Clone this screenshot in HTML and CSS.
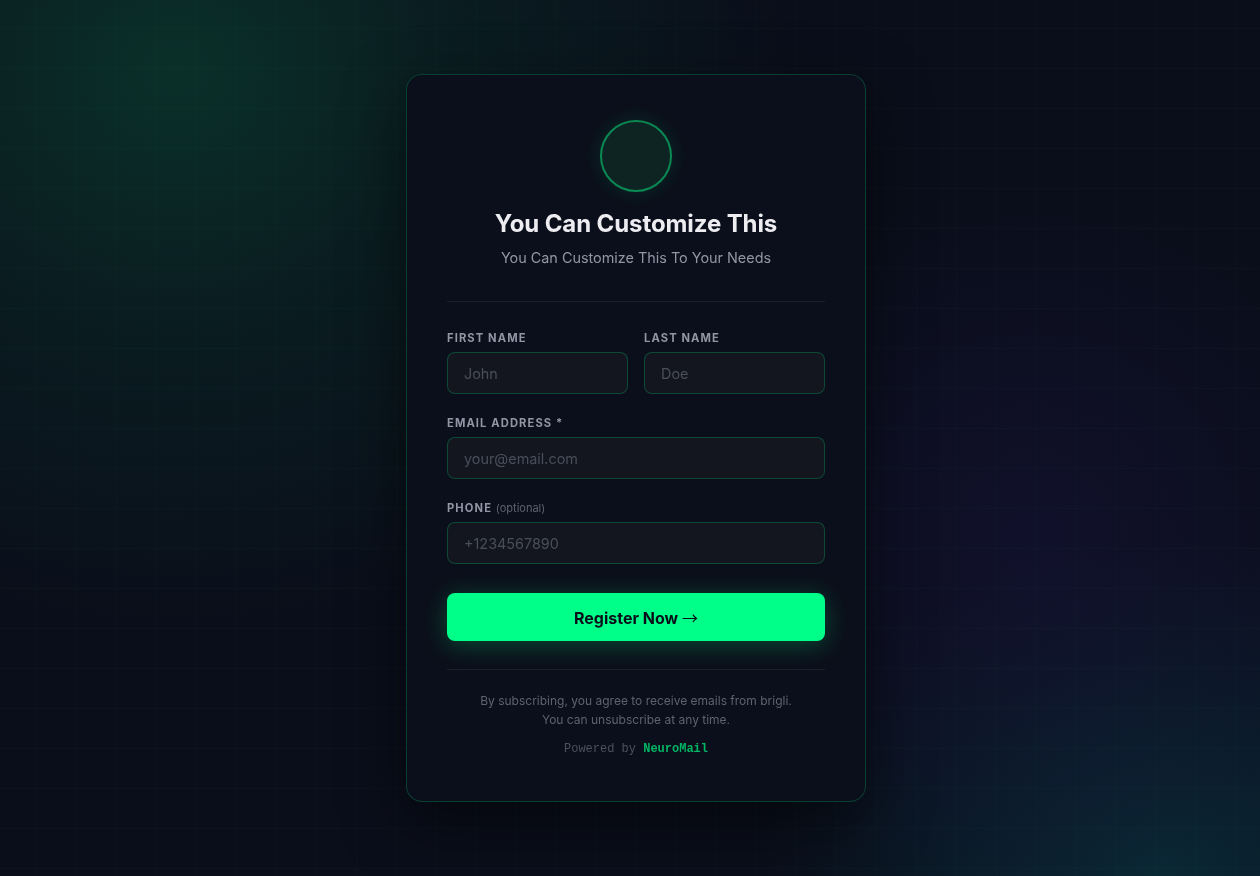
FILE: index.html
```html
<!DOCTYPE html>
<html lang="en">
<head>
<meta charset="utf-8">
<title>Register</title>
<link rel="stylesheet" href="styles.css">
</head>
<body>
<div class="bg"></div>
<main class="page">
  <section class="card">
    <div class="logo"></div>
    <h1 class="title">You Can Customize This</h1>
    <p class="subtitle">You Can Customize This To Your Needs</p>
    <hr class="divider">
    <form class="form">
      <div class="row">
        <div class="field">
          <label class="label">First Name</label>
          <input class="input" type="text" placeholder="John">
        </div>
        <div class="field">
          <label class="label">Last Name</label>
          <input class="input" type="text" placeholder="Doe">
        </div>
      </div>
      <div class="field">
        <label class="label">Email Address *</label>
        <input class="input" type="email" placeholder="your@email.com">
      </div>
      <div class="field">
        <label class="label">Phone <span class="opt">(optional)</span></label>
        <input class="input" type="tel" placeholder="+1234567890">
      </div>
      <button class="btn" type="button">Register Now <span class="arrow">→</span></button>
    </form>
    <hr class="divider bottom">
    <p class="legal">By subscribing, you agree to receive emails from brigli.<br>You can unsubscribe at any time.</p>
    <p class="powered">Powered by <span class="brand">NeuroMail</span></p>
  </section>
</main>
</body>
</html>
```

FILE: styles.css
```css
* { box-sizing: border-box; }
html, body { margin: 0; padding: 0; height: 100%; }
body {
  font-family: Inter, "Noto Sans", sans-serif;
  background: #0a0e1a;
  color: #e5e7eb;
  overflow: hidden;
}
.bg {
  position: fixed;
  inset: 0;
  background:
    radial-gradient(ellipse 620px 560px at 14% 8%, rgba(10, 50, 42, 0.95), rgba(10, 50, 42, 0.4) 45%, rgba(10, 50, 42, 0) 100%),
    radial-gradient(ellipse 360px 360px at 82% 62%, rgba(24, 18, 60, 0.5), rgba(24, 18, 60, 0) 100%),
    radial-gradient(ellipse 400px 340px at 92% 100%, rgba(10, 48, 62, 0.75), rgba(10, 48, 62, 0) 100%),
    #0a0e1a;
}
.bg::after {
  content: "";
  position: absolute;
  inset: 0;
  background-image:
    linear-gradient(rgba(0, 255, 136, 0.025) 1px, transparent 1px),
    linear-gradient(90deg, rgba(0, 255, 136, 0.025) 1px, transparent 1px);
  background-size: 40px 40px;
  background-position: 36px 28px;
}
.page {
  position: relative;
  min-height: 100%;
  display: flex;
  justify-content: center;
  padding-top: 74px;
  padding-left: 12px;
}
.card {
  width: 460px;
  height: 728px;
  background: #0b0f1b;
  border: 1px solid rgba(0, 255, 136, 0.2);
  border-radius: 16px;
  padding: 45px 40px;
  box-shadow: 0 20px 60px rgba(0, 0, 0, 0.5);
  display: flex;
  flex-direction: column;
  align-items: center;
}
.logo {
  width: 72px;
  height: 72px;
  border-radius: 50%;
  border: 2px solid #0a8a52;
  background: #0e2423;
  box-shadow: 0 0 20px rgba(0, 255, 136, 0.12);
  flex: none;
}
.title {
  margin: 16px 0 0;
  font-size: 24px;
  line-height: 32px;
  font-weight: 700;
  color: #ececf1;
  letter-spacing: -0.1px;
}
.subtitle {
  margin: 8px 0 0;
  font-size: 14.4px;
  line-height: 20px;
  color: #9096a4;
}
.divider {
  width: 100%;
  border: 0;
  border-top: 1px solid #1b1f2b;
  margin: 33px 0 0;
}
.divider.bottom { margin-top: 28px; }
.form {
  width: 100%;
  display: flex;
  flex-direction: column;
  gap: 21px;
  margin-top: 28px;
}
.row {
  display: grid;
  grid-template-columns: 1fr 1fr;
  gap: 16px;
}
.field {
  display: flex;
  flex-direction: column;
  gap: 6px;
}
.label {
  font-size: 11.2px;
  line-height: 16px;
  font-weight: 700;
  letter-spacing: 1.1px;
  text-transform: uppercase;
  color: #9096a4;
}
.opt {
  text-transform: none;
  font-weight: 400;
  letter-spacing: 0;
  font-size: 11px;
  color: #5d6270;
}
.input {
  width: 100%;
  height: 42px;
  background: #13161f;
  border: 1px solid rgba(0, 255, 136, 0.22);
  border-radius: 8px;
  padding: 0 16px;
  font-family: Inter, "Noto Sans", sans-serif;
  font-size: 14.4px;
  color: #e5e7eb;
  outline: none;
}
.input::placeholder { color: #4a4e5a; }
.btn {
  margin-top: 8px;
  height: 48px;
  width: 100%;
  border: 0;
  border-radius: 8px;
  background: #00ff88;
  color: #0a0e1a;
  font-family: Inter, "Noto Sans", sans-serif;
  font-size: 16px;
  font-weight: 700;
  box-shadow: 0 4px 24px rgba(0, 255, 136, 0.25);
  cursor: pointer;
}
.arrow {
  font-family: "Noto Sans CJK SC", "Noto Sans", sans-serif;
  font-weight: 400;
}
.legal {
  margin: 21px 0 0;
  font-size: 12px;
  line-height: 19px;
  color: #5d6270;
  text-align: center;
}
.powered {
  margin: 12px 0 0;
  font-family: "Liberation Mono", "DejaVu Sans Mono", monospace;
  font-size: 12px;
  line-height: 16px;
  color: #4c515d;
}
.brand {
  color: #00b563;
  font-weight: 700;
}
```
